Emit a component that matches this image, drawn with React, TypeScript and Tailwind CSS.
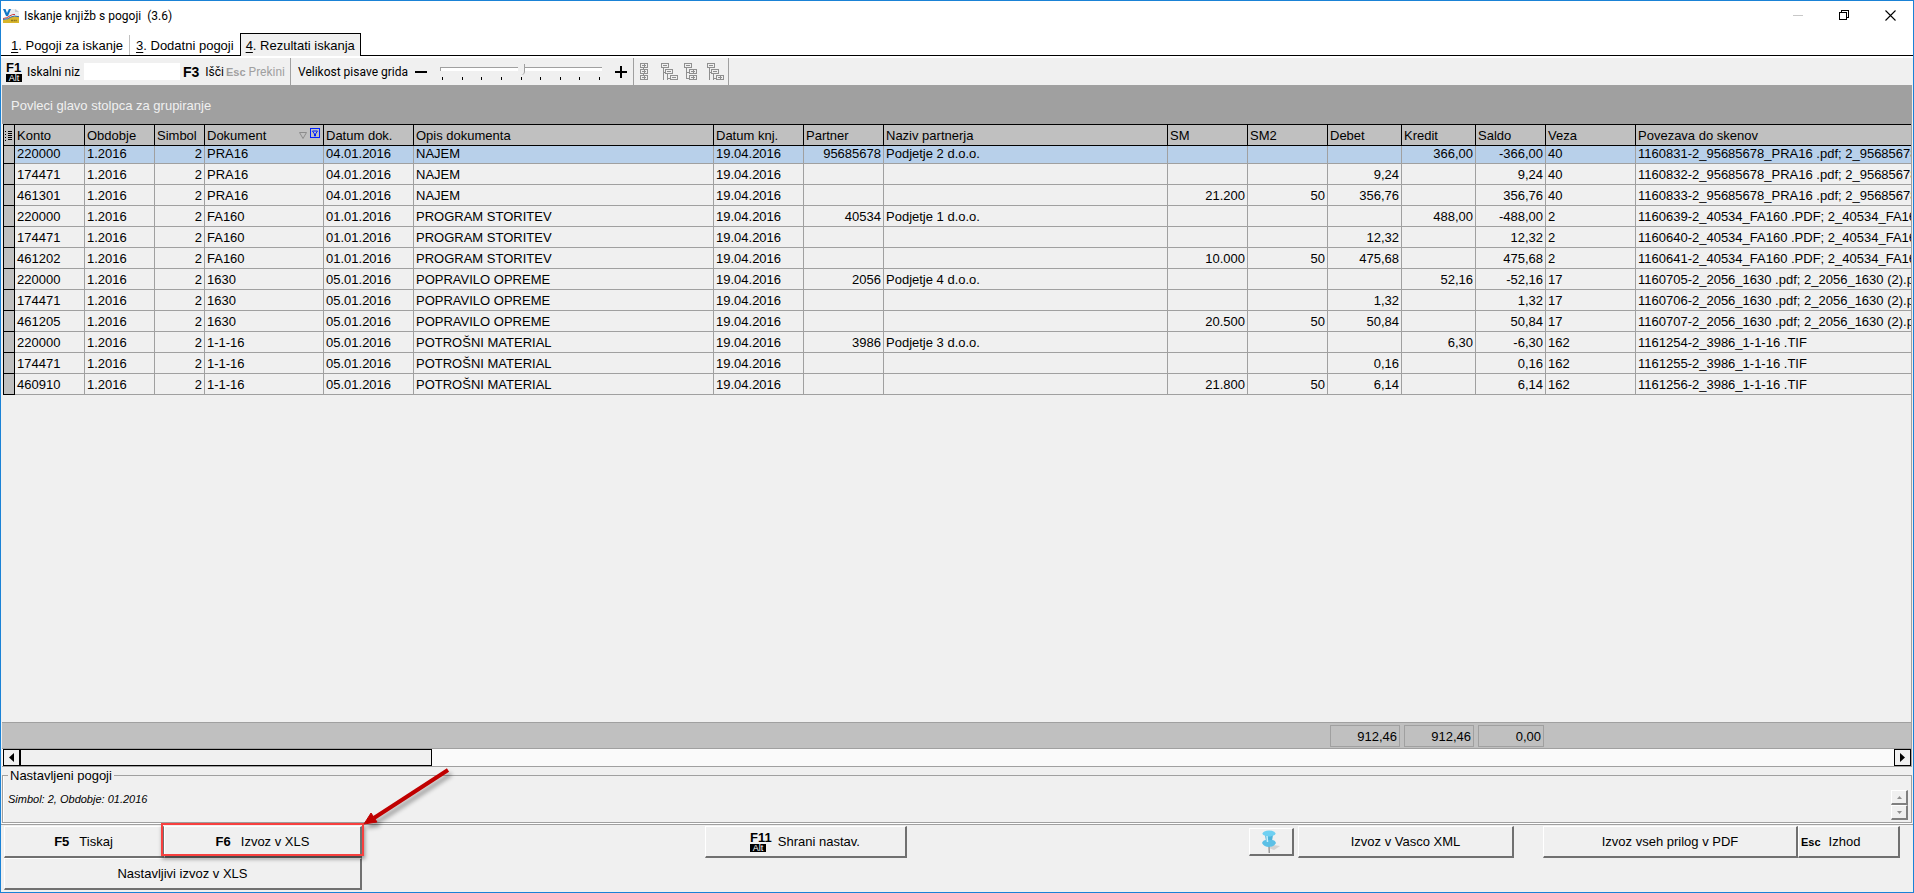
import { useState } from "react";
import clsx from "clsx";

type Column = {
  key: string;
  title: string;
  width?: string;
  right?: boolean;
};

const columns: Column[] = [
  { key: "konto", title: "Konto", width: "w-[70px]" },
  { key: "obdobje", title: "Obdobje", width: "w-[70px]" },
  { key: "simbol", title: "Simbol", width: "w-[50px]", right: true },
  { key: "dokument", title: "Dokument", width: "w-[119px]" },
  { key: "datumDok", title: "Datum dok.", width: "w-[90px]" },
  { key: "opis", title: "Opis dokumenta", width: "w-[300px]" },
  { key: "datumKnj", title: "Datum knj.", width: "w-[90px]" },
  { key: "partner", title: "Partner", width: "w-[80px]", right: true },
  { key: "naziv", title: "Naziv partnerja", width: "w-[284px]" },
  { key: "sm", title: "SM", width: "w-[80px]", right: true },
  { key: "sm2", title: "SM2", width: "w-[80px]", right: true },
  { key: "debet", title: "Debet", width: "w-[74px]", right: true },
  { key: "kredit", title: "Kredit", width: "w-[74px]", right: true },
  { key: "saldo", title: "Saldo", width: "w-[70px]", right: true },
  { key: "veza", title: "Veza", width: "w-[90px]" },
  { key: "skeni", title: "Povezava do skenov" },
];

const D1 = "04.01.2016";
const D2 = "01.01.2016";
const D3 = "05.01.2016";
const K = "19.04.2016";

const rows: string[][] = [
  ["220000", "1.2016", "2", "PRA16", D1, "NAJEM", K, "95685678", "Podjetje 2 d.o.o.", "", "", "", "366,00", "-366,00", "40", "1160831-2_95685678_PRA16 .pdf; 2_95685678"],
  ["174471", "1.2016", "2", "PRA16", D1, "NAJEM", K, "", "", "", "", "9,24", "", "9,24", "40", "1160832-2_95685678_PRA16 .pdf; 2_95685678"],
  ["461301", "1.2016", "2", "PRA16", D1, "NAJEM", K, "", "", "21.200", "50", "356,76", "", "356,76", "40", "1160833-2_95685678_PRA16 .pdf; 2_95685678"],
  ["220000", "1.2016", "2", "FA160", D2, "PROGRAM STORITEV", K, "40534", "Podjetje 1 d.o.o.", "", "", "", "488,00", "-488,00", "2", "1160639-2_40534_FA160 .PDF; 2_40534_FA16"],
  ["174471", "1.2016", "2", "FA160", D2, "PROGRAM STORITEV", K, "", "", "", "", "12,32", "", "12,32", "2", "1160640-2_40534_FA160 .PDF; 2_40534_FA16"],
  ["461202", "1.2016", "2", "FA160", D2, "PROGRAM STORITEV", K, "", "", "10.000", "50", "475,68", "", "475,68", "2", "1160641-2_40534_FA160 .PDF; 2_40534_FA16"],
  ["220000", "1.2016", "2", "1630", D3, "POPRAVILO OPREME", K, "2056", "Podjetje 4 d.o.o.", "", "", "", "52,16", "-52,16", "17", "1160705-2_2056_1630 .pdf; 2_2056_1630 (2).pd"],
  ["174471", "1.2016", "2", "1630", D3, "POPRAVILO OPREME", K, "", "", "", "", "1,32", "", "1,32", "17", "1160706-2_2056_1630 .pdf; 2_2056_1630 (2).pd"],
  ["461205", "1.2016", "2", "1630", D3, "POPRAVILO OPREME", K, "", "", "20.500", "50", "50,84", "", "50,84", "17", "1160707-2_2056_1630 .pdf; 2_2056_1630 (2).pd"],
  ["220000", "1.2016", "2", "1-1-16", D3, "POTROŠNI MATERIAL", K, "3986", "Podjetje 3 d.o.o.", "", "", "", "6,30", "-6,30", "162", "1161254-2_3986_1-1-16 .TIF"],
  ["174471", "1.2016", "2", "1-1-16", D3, "POTROŠNI MATERIAL", K, "", "", "", "", "0,16", "", "0,16", "162", "1161255-2_3986_1-1-16 .TIF"],
  ["460910", "1.2016", "2", "1-1-16", D3, "POTROŠNI MATERIAL", K, "", "", "21.800", "50", "6,14", "", "6,14", "162", "1161256-2_3986_1-1-16 .TIF"],
];

const tabs = [
  { num: "1", label: "Pogoji za iskanje" },
  { num: "3", label: "Dodatni pogoji" },
  { num: "4", label: "Rezultati iskanja" },
];

export default function App() {
  return (
    <div className="flex h-screen flex-col overflow-hidden border border-[#1a82d6] bg-[#f0f0f0] font-['Liberation_Sans',Arial,sans-serif] text-[13px] leading-4 text-black">
      <TitleBar />
      <Tabs />
      <Toolbar />
      <main className="mx-px flex min-h-0 flex-1 flex-col border-r border-[#a0a0a0]">
        <div className="flex h-[39px] shrink-0 items-center bg-[#a0a0a0] px-[9px] pt-0.5 text-[#f0f0f0]">
          Povleci glavo stolpca za grupiranje
        </div>
        <Grid />
        <Summary />
        <ScrollBar />
      </main>
      <Conditions />
      <ButtonBar />
    </div>
  );
}

function TitleBar() {
  return (
    <header className="flex h-8 shrink-0 items-start bg-white font-[Roboto,'Open_Sans',sans-serif]">
      <div className="flex h-[29px] flex-1 items-center gap-[5px] pl-[2px]">
        <AppLogo />
        <h1 className="text-[12px] whitespace-pre">Iskanje knjižb s pogoji  (3.6)</h1>
      </div>
      <div className="flex h-7 text-black">
        <button type="button" aria-label="Minimiraj" disabled className="grid w-[46px] place-items-center text-[#c8c8c8]">
          <svg width="10" height="10" stroke="currentColor" shapeRendering="crispEdges">
            <path d="M0 5.5h10" />
          </svg>
        </button>
        <button type="button" aria-label="Obnovi" className="grid w-[46px] place-items-center">
          <svg width="10" height="10" fill="none" stroke="currentColor" shapeRendering="crispEdges">
            <path d="M.5 2.5h7v7h-7zM2.5 2.5v-2h7v7h-2" />
          </svg>
        </button>
        <button type="button" aria-label="Zapri" className="grid w-[46px] place-items-center">
          <svg width="11" height="11" fill="none" stroke="currentColor" strokeWidth="1.1">
            <path d="M.5.5l10 10M10.5.5l-10 10" />
          </svg>
        </button>
      </div>
    </header>
  );
}

function AppLogo() {
  return (
    <svg width="16" height="16" viewBox="0 0 16 16" aria-hidden>
      <path d="M5 1h8l3 3v7H2z" fill="#e9eef2" />
      <path d="M12 1v3h4z" fill="#c3ccd4" />
      <path d="M0 1h2.5l1.500 4 2-4h2L5 8H3z" fill="#1478c8" />
      <path d="M0 12q4-.5 7-2.500 4-2 9-.5V15H0z" fill="#d8b62c" />
      <path d="M0 10.500q4-.2 7-2.700 3-2 5-1.300" fill="none" stroke="#d23a3a" />
      <path d="M0 11.500q5-.3 8-2.500 3-1.700 8-.3" fill="none" stroke="#2d6cae" />
      <path d="M8 12.500h6" stroke="#8a7420" strokeWidth="1.500" strokeDasharray="2 .6" />
    </svg>
  );
}

function Tabs() {
  const [active, setActive] = useState("4");
  return (
    <div role="tablist" className="flex h-[23px] shrink-0 items-end border-b border-black bg-white pl-1">
      {tabs.map((tab, i) => (
        <button
          key={tab.num}
          type="button"
          role="tab"
          aria-selected={tab.num === active}
          onClick={() => setActive(tab.num)}
          className={clsx(
            "whitespace-nowrap",
            tab.num === active
              ? "-mb-px h-[23px] border border-b-0 border-black bg-[#f0f0f0] px-[5px] pt-0.5"
              : "h-5 px-1.5 pt-0.5",
            i === 0 && "border-r border-[#c0c0c0]"
          )}
        >
          <span className="underline underline-offset-2">{tab.num}</span>. {tab.label}
        </button>
      ))}
    </div>
  );
}

function KeyCap({ name }: { name: string }) {
  return (
    <span className="flex flex-col items-start font-bold">
      <span className="text-[13px] leading-3">{name}</span>
      <span className="h-2 w-4 overflow-hidden bg-black text-center text-[9px] leading-2 font-normal text-white">Alt</span>
    </span>
  );
}

const treeIcons = [
  { label: "Skrči vse", boxes: [[2, 1, 1], [2, 7, 1], [2, 13, 1]], lines: "M5.5 5v2M5.5 11v2" },
  { label: "Razširi skupino", boxes: [[0, 1, 0], [4, 7, 0], [9, 13, 0]], lines: "M2.5 5v12M2.5 9.5h2M6.5 11v6M6.5 15.5h3" },
  { label: "Skrči skupino", boxes: [[0, 1, 0], [5, 7, 1], [5, 13, 1]], lines: "M2.5 5v10.5h2M2.5 9.5h2" },
  { label: "Razširi vse", boxes: [[0, 1, 0], [4, 7, 0], [9, 13, 1]], lines: "M2.5 5v12M2.5 9.5h2M6.5 11v6M6.5 15.5h3" },
];

function Toolbar() {
  const [size, setSize] = useState(4);
  return (
    <div className="flex h-[29px] shrink-0 border-t-2 border-white pl-[5px] font-[Roboto,'Open_Sans',sans-serif] text-[12px]">
      <div className="flex items-center border-r border-[#a0a0a0]">
        <span className="w-4 font-['Liberation_Sans']">
          <KeyCap name="F1" />
        </span>
        <label htmlFor="iskalni-niz" className="ml-[5px] w-[57px] whitespace-nowrap">Iskalni niz</label>
        <input id="iskalni-niz" className="h-[17px] w-24 bg-white px-1 outline-none" />
        <button type="button" className="flex w-[46px] items-center gap-1.5 pl-[3px]">
          <b className="font-['Liberation_Sans'] text-[14px]">F3</b>Išči
        </button>
        <button type="button" disabled className="flex w-16 items-center gap-[3px] whitespace-nowrap text-[#a0a0a0]">
          <b className="font-['Liberation_Sans'] text-[11px]">Esc</b>Prekini
        </button>
      </div>
      <div className="flex items-center border-r border-[#a0a0a0] pr-1.5 pl-[7px]">
        <label htmlFor="velikost" className="w-[106px] whitespace-nowrap">Velikost pisave grida</label>
        <button type="button" aria-label="Zmanjšaj" onClick={() => setSize(Math.max(0, size - 1))} className="ml-[11px] h-3 w-3">
          <svg width="12" height="12" shapeRendering="crispEdges"><path d="M0 5h12v2H0z" /></svg>
        </button>
        <div className="mx-[13px] flex w-[162px] flex-col gap-0.5">
          <input
            id="velikost"
            type="range"
            min={0}
            max={8}
            value={size}
            onChange={(e) => setSize(Number(e.target.value))}
            className="my-1 block h-1 w-full appearance-none border-t border-l border-[#a0a0a0] bg-white [&::-webkit-slider-thumb]:h-[11px] [&::-webkit-slider-thumb]:w-[7px] [&::-webkit-slider-thumb]:appearance-none [&::-webkit-slider-thumb]:rounded-br-sm [&::-webkit-slider-thumb]:border-r [&::-webkit-slider-thumb]:border-[#a0a0a0] [&::-webkit-slider-thumb]:bg-[#f0f0f0]"
          />
          <div className="flex justify-between px-0.5">
            {Array.from({ length: 9 }, (_, i) => (
              <span key={i} className="h-[3px] w-px bg-black" />
            ))}
          </div>
        </div>
        <button type="button" aria-label="Povečaj" onClick={() => setSize(Math.min(8, size + 1))} className="h-3 w-3">
          <svg width="12" height="12" shapeRendering="crispEdges"><path d="M0 5h12v2H0zM5 0h2v12H5z" /></svg>
        </button>
      </div>
      <div className="flex items-center gap-[6px] border-r border-[#a0a0a0] pr-1 pl-1">
        {treeIcons.map((icon) => (
          <button key={icon.label} type="button" aria-label={icon.label}>
            <svg width="17" height="18" fill="none" stroke="#8f8f8f" shapeRendering="crispEdges">
              <path d={icon.lines} />
              {icon.boxes.map(([x, y, plus]) => (
                <path
                  key={`${x}-${y}`}
                  d={`M${x + 0.5} ${y - 0.5}h7v4h-7zM${x + 2} ${y + 1.5}h4${plus ? `M${x + 4} ${y}v3` : ""}`}
                />
              ))}
            </svg>
          </button>
        ))}
      </div>
    </div>
  );
}

function Grid() {
  return (
    <div className="min-h-0 flex-1 overflow-hidden border-l border-[#f0f0f0]">
      <table className="w-full table-fixed border-separate border-spacing-0 whitespace-nowrap">
        <thead>
          <tr className="h-[22px] bg-[#c0c0c0] text-left">
            <th aria-label="Stolpci" className="w-3 border border-black p-0">
              <svg width="8" height="11" className="mx-auto" stroke="#000" shapeRendering="crispEdges" aria-hidden>
                <path d="M0 1.5h1M0 4.5h1M0 7.5h1M0 10.5h1M3 1.5h4M3 3.5h4M3 5.5h4M3 7.5h4M3 9.5h4" />
              </svg>
            </th>
            {columns.map((col) => (
              <th
                key={col.key}
                className={clsx("border-y border-black p-0 pt-0.5 pl-0.5 font-normal", col.width, col.width && "border-r")}
              >
                {col.key === "dokument" ? (
                  <div className="flex items-center justify-between pr-0.5">
                    Dokument
                    <SortMarks />
                  </div>
                ) : (
                  col.title
                )}
              </th>
            ))}
          </tr>
        </thead>
        <tbody>
          {rows.map((row, r) => (
            <tr key={r} className={r === 0 ? "h-[18px] bg-[#b8d0ea]" : "h-[21px]"}>
              <td className="border-x border-b border-black bg-[#c0c0c0] p-0" />
              {row.map((value, c) => (
                <td
                  key={columns[c].key}
                  className={clsx(
                    "border-b border-[#a0a0a0] pl-0.5",
                    columns[c].right && "text-right",
                    columns[c].width ? "border-r pr-0.5" : "pr-0",
                    r === 0 ? "pt-0 pb-0.5 leading-[14px]" : "pt-0.5 pb-0"
                  )}
                >
                  {value}
                </td>
              ))}
            </tr>
          ))}
        </tbody>
      </table>
    </div>
  );
}

function SortMarks() {
  return (
    <svg width="23" height="16" fill="none" aria-hidden>
      <path d="M1.5 4.5h7l-3.500 6z" stroke="#8c8c8c" />
      <path d="M12.5.5h9v9h-9z" stroke="#0020ff" shapeRendering="crispEdges" />
      <path d="M14.5 3h5l-2 3v2h-1v-2z" stroke="#0020ff" />
    </svg>
  );
}

function Summary() {
  return (
    <div className="flex h-[27px] shrink-0 items-center gap-1 border-y border-[#a0a0a0] bg-[#c0c0c0] pl-[1328px]">
      <output className="h-[22px] w-[70px] border border-[#a0a0a0] px-0.5 pt-px text-right leading-5">912,46</output>
      <output className="h-[22px] w-[70px] border border-[#a0a0a0] px-0.5 pt-px text-right leading-5">912,46</output>
      <output className="h-[22px] w-[66px] border border-[#a0a0a0] px-0.5 pt-px text-right leading-5">0,00</output>
    </div>
  );
}

function ScrollBar() {
  return (
    <div className="flex h-[18px] shrink-0 border-b border-[#a0a0a0] bg-[#fafafa] pl-px">
      <button type="button" aria-label="Levo" className="grid w-[17px] place-items-center border border-black bg-[#f0f0f0]">
        <svg width="5" height="9"><path d="M5 0v9L0 4.5z" /></svg>
      </button>
      <div className="w-[412px] border border-black bg-[#f0f0f0]" />
      <button type="button" aria-label="Desno" className="ml-auto grid w-[17px] place-items-center border border-black bg-[#f0f0f0]">
        <svg width="5" height="9"><path d="M0 0v9l5-4.500z" /></svg>
      </button>
    </div>
  );
}

function Conditions() {
  const spin =
    "grid h-[15px] w-[17px] place-items-center border-t border-r-2 border-b-2 border-l border-t-white border-r-[#808080] border-b-[#808080] border-l-white";
  return (
    <section className="shrink-0 border-b border-[#a0a0a0] px-px pb-px">
      <fieldset className="flex h-[56px] border border-[#a0a0a0] pr-[3px] pl-[5px] shadow-[inset_1px_0_#fff,0_1px_#fff]">
        <legend className="ml-0 px-0.5 pt-px leading-4">Nastavljeni pogoji</legend>
        <p className="flex-1 pt-[7px] text-[11px] leading-4 italic">Simbol: 2, Obdobje: 01.2016</p>
        <div className="flex flex-col pt-[6px]">
          <button type="button" disabled aria-label="Gor" className={spin}>
            <svg width="5" height="3" fill="#909090"><path d="M0 3h5L2.5 0z" /></svg>
          </button>
          <button type="button" disabled aria-label="Dol" className={spin}>
            <svg width="5" height="3" fill="#909090"><path d="M0 0h5L2.5 3z" /></svg>
          </button>
        </div>
      </fieldset>
    </section>
  );
}

const raised =
  "flex items-center whitespace-nowrap border-t border-l border-r-2 border-b-2 border-t-white border-l-white border-r-[#707070] border-b-[#707070] bg-[#f0f0f0] pt-px";

function ButtonBar() {
  return (
    <footer className="flex shrink-0 items-start justify-between pt-px pr-[13px] pb-0.5 pl-[3px]">
      <div className="grid grid-cols-[160px_198px]">
        <button type="button" className={clsx(raised, "h-8 justify-center gap-2.5")}>
          <b className="text-[13px]">F5</b>Tiskaj
        </button>
        <div className="relative">
          <button type="button" className={clsx(raised, "h-8 w-full justify-center gap-2.5")}>
            <b className="text-[13px]">F6</b>Izvoz v XLS
          </button>
          <Callout />
        </div>
        <button type="button" className={clsx(raised, "col-span-2 h-8 justify-center")}>Nastavljivi izvoz v XLS</button>
      </div>
      <button type="button" className={clsx(raised, "h-8 w-[202px] justify-center gap-1.5")}>
        <KeyCap name="F11" />
        Shrani nastav.
      </button>
      <div className="flex items-center">
        <button type="button" aria-label="Pripni" className={clsx(raised, "h-7 w-[45px] justify-center")}>
          <PinIcon />
        </button>
        <button type="button" className={clsx(raised, "ml-1 h-8 w-[216px] justify-center")}>Izvoz v Vasco XML</button>
        <button type="button" className={clsx(raised, "ml-[29px] h-8 w-[255px] justify-center")}>Izvoz vseh prilog v PDF</button>
        <button type="button" className={clsx(raised, "h-8 w-[102px] gap-2 pl-0.5")}>
          <b className="text-[11px]">Esc</b>Izhod
        </button>
      </div>
    </footer>
  );
}

function PinIcon() {
  return (
    <svg width="22" height="24" viewBox="0 0 22 24" aria-hidden>
      <path d="M9 18l4-3 7 1-6 4z" fill="#c4c4c4" opacity=".7" />
      <path d="M8.5 16h1l.2 7h-1z" fill="#707070" />
      <path d="M5 5h8l-1 6H6z" fill="#4fb4dc" />
      <path d="M2 13q1-3 4-3h6q3 0 4 3-2 4-7 4t-7-4z" fill="#5cc0e6" />
      <ellipse cx="9" cy="3.5" rx="6.5" ry="3" fill="#6fd0f2" />
      <path d="M7 6l.5 6" stroke="#c8effc" strokeWidth="1.5" />
    </svg>
  );
}

// Red frame and arrow that point out the export button
function Callout() {
  return (
    <div aria-hidden className="pointer-events-none absolute -top-[3px] right-[-2px] bottom-0.5 -left-[3px] border-2 border-[#f8403f] shadow-[1px_3px_4px_rgba(0,0,0,0.4)]">
      <svg width="100" height="70" className="absolute right-[-98px] bottom-[27px] drop-shadow-[3px_4px_2px_rgba(0,0,0,0.35)]">
        <path d="M88 13L14 61" stroke="#c00000" strokeWidth="4" />
        <path d="M4 67l7-11 6 9z" fill="#c00000" stroke="#c00000" />
      </svg>
    </div>
  );
}
